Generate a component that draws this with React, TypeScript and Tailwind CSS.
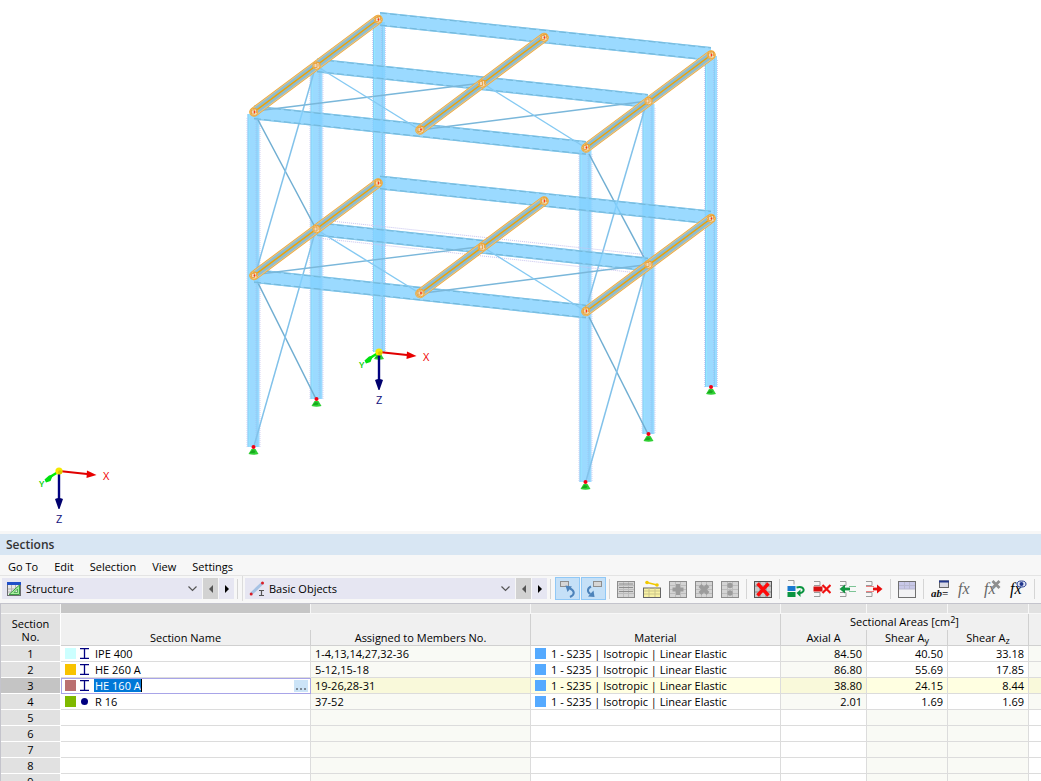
import { ReactNode } from "react";
import clsx from "clsx";

type Point = [number, number];

const FONT = "font-['Open_Sans','Noto_Sans',sans-serif]";

const MENU = ["Go To", "Edit", "Selection", "View", "Settings"];

type Section = {
  color: string;
  shape: "I" | "R";
  name: string;
  members: string;
  areas: [string, string, string];
};

const SECTIONS: Section[] = [
  { color: "bg-[#ccffff]", shape: "I", name: "IPE 400", members: "1-4,13,14,27,32-36", areas: ["84.50", "40.50", "33.18"] },
  { color: "bg-[#f8c300]", shape: "I", name: "HE 260 A", members: "5-12,15-18", areas: ["86.80", "55.69", "17.85"] },
  { color: "bg-[#ba7070]", shape: "I", name: "HE 160 A", members: "19-26,28-31", areas: ["38.80", "24.15", "8.44"] },
  { color: "bg-[#7fb900]", shape: "R", name: "R 16", members: "37-52", areas: ["2.01", "1.69", "1.69"] },
];

const MATERIAL = "1 - S235 | Isotropic | Linear Elastic";
const ACTIVE = 3;

/* ---------- structure model ---------- */

// columns: x, top, bottom
const COLUMNS: [number, number, number][] = [
  [379, 22, 352],
  [711, 56, 387],
  [316.5, 68, 399],
  [648.5, 104, 434],
  [253.5, 114, 447],
  [585.5, 150, 482],
];

// one storey, the lower one is the same shape 164px further down
const BEAMS: [Point, Point][] = [
  [[380, 19], [711, 54]],
  [[317, 65.5], [648, 101]],
  [[254, 112.5], [586, 148]],
];

const PURLINS: [Point, Point][] = [
  [[378, 19.5], [254, 112]],
  [[544, 37.5], [420, 130]],
  [[711, 55], [586, 148]],
];

const NODES: Point[] = [
  [378, 19.5], [316.5, 65.5], [254, 112],
  [544, 37.5], [482, 83.5], [420.5, 129.5],
  [711, 55], [648.5, 101], [586, 147.5],
];

const FLOOR_BRACES: [Point, Point, string][] = [
  [[256, 111], [482, 83], "#7ab7da"],
  [[318, 67], [420, 130], "#84c9f2"],
  [[420, 130], [648, 101], "#7ab7da"],
  [[482, 83], [586, 148], "#84c9f2"],
];

const WALL_BRACES: [Point, Point, string][] = [
  [[257, 118], [316, 229], "#70aed2"],
  [[314, 72], [256, 272], "#82c2ea"],
  [[589, 154], [648, 265], "#70aed2"],
  [[645, 108], [588, 302], "#82c2ea"],
  [[257, 281], [316, 399], "#70aed2"],
  [[314, 236], [254, 446], "#82c2ea"],
  [[589, 317], [648, 434], "#70aed2"],
  [[645, 272], [586, 481], "#82c2ea"],
];

function Column({ x, top, bottom }: { x: number; top: number; bottom: number }) {
  return (
    <g>
      <rect x={x - 6} y={top} width={12} height={bottom - top} fill="#82d1ff" opacity={0.8} />
      <path d={`M${x - 4.5} ${top}V${bottom}`} stroke="#96e8ff" />
      <path d={`M${x - 5.5} ${top}V${bottom}M${x + 3.5} ${top}V${bottom}`} stroke="#83ccf5" strokeWidth={0.8} />
      <path
        d={`M${x - 6.5} ${top + 4}V${bottom}M${x + 6.5} ${top + 4}V${bottom}`}
        stroke="#c8c4f0"
        strokeWidth={0.8}
        strokeDasharray="1 1"
      />
      <path d={`M${x + 2.5} ${top}V${bottom}`} stroke="#a5b8ec" strokeWidth={0.6} strokeDasharray="1 1" />
    </g>
  );
}

function Beam({ from: [x1, y1], to: [x2, y2], dotted }: { from: Point; to: Point; dotted?: boolean }) {
  return (
    <g>
      <path d={`M${x1} ${y1 - 7}L${x2} ${y2 - 7}V${y2 + 7}L${x1} ${y1 + 7}Z`} fill="#82d1ff" opacity={0.8} />
      <path d={`M${x1} ${y1 - 6.5}L${x2} ${y2 - 6.5}M${x1} ${y1 + 6.5}L${x2} ${y2 + 6.5}`} stroke="#86c6e8" />
      <path
        d={`M${x1} ${y1 - 6}L${x2} ${y2 - 6}M${x1} ${y1 + 6}L${x2} ${y2 + 6}`}
        stroke="#6fb6d8"
        strokeWidth={0.9}
        strokeDasharray="7 3"
      />
      {dotted && (
        <path
          d={`M${x1 + 14} ${y1 - 8}L${x2 - 4} ${y2 - 10}M${x1} ${y1 + 9}L${x2 - 14} ${y2 + 8}`}
          stroke="#c8c4f0"
          strokeDasharray="1 1"
        />
      )}
    </g>
  );
}

function Purlin({ from: [x1, y1], to: [x2, y2] }: { from: Point; to: Point }) {
  const d = `M${x1} ${y1}L${x2} ${y2}`;
  return (
    <g fill="none" strokeLinecap="round">
      <path d={d} stroke="#f2a93a" strokeWidth={9.6} />
      <path d={d} stroke="#d9c796" strokeWidth={8} />
      <path d={d} stroke="#8cbcd2" strokeWidth={6.4} />
      <path d={d} stroke="#f2a200" strokeWidth={1.5} />
    </g>
  );
}

function Node({ at: [x, y], inner }: { at: Point; inner: boolean }) {
  return (
    <g fill="none">
      <circle cx={x} cy={y} r={3.8} fill="#f0d9bb" stroke="#f2a62c" strokeWidth={0.9} />
      <path d={`M${x - 2.5} ${y - 2}h3v4h-3ZM${x - 1} ${y - 3}h3.500v4`} stroke="#e59a30" strokeWidth={0.8} />
      {!inner && <circle cx={x + 0.5} cy={y} r={0.9} fill="#ff2a1a" />}
    </g>
  );
}

function Storey({ dy, dotted }: { dy: number; dotted?: boolean }) {
  return (
    <g transform={`translate(0 ${dy})`}>
      {BEAMS.map(([a, b], i) => (
        <Beam key={i} from={a} to={b} dotted={dotted && i === 1} />
      ))}
      {FLOOR_BRACES.map(([a, b, stroke], i) => (
        <path key={i} d={`M${a}L${b}`} stroke={stroke} strokeWidth={1.4} />
      ))}
      {PURLINS.map(([a, b], i) => (
        <Purlin key={i} from={a} to={b} />
      ))}
      {NODES.map((p, i) => (
        <Node key={i} at={p} inner={i % 3 === 1} />
      ))}
    </g>
  );
}

function Axes({ x, y }: { x: number; y: number }) {
  return (
    <g transform={`translate(${x} ${y})`}>
      <path d="M0 0L28 3" stroke="#e00000" strokeWidth={2.2} />
      <path d="M28 -0.5L37.500 4L27.500 7Z" fill="#e80000" />
      <path d="M0 2V29" stroke="#000080" strokeWidth={2.4} />
      <path d="M-4 28Q0 26 4 28L0.500 38H-0.500Z" fill="#00006e" />
      <path d="M-1 1L-9 6" stroke="#00f000" strokeWidth={2.6} />
      <path d="M-6 4L-10 4.500L-14.500 8.500L-13 11.500L-8.500 10Z" fill="#00e010" />
      <circle r={3.6} fill="#f4e800" />
      <circle cx={1} cy={1.2} r={2} fill="#d8c800" />
      <text x={44} y={9} fontSize={11} fill="#f00000">X</text>
      <text x={-20} y={16} fontSize={9} fontWeight={600} fill="#00d000">Y</text>
      <text x={-3} y={52} fontSize={11} fill="#10107c">Z</text>
    </g>
  );
}

function Model() {
  return (
    <svg viewBox="0 0 1041 531" className="block w-full shrink-0 bg-white" role="img" aria-label="Structure model">
      {COLUMNS.map(([x, top, bottom]) => (
        <Column key={x} x={x} top={top} bottom={bottom} />
      ))}
      {WALL_BRACES.map(([a, b, stroke], i) => (
        <path key={i} d={`M${a}L${b}`} stroke={stroke} strokeWidth={1.5} />
      ))}
      <Storey dy={0} />
      <Storey dy={163.5} dotted />
      {COLUMNS.map(([x, , y]) => (
        <g key={x}>
          <path d={`M${x - 2} ${y + 2}h4l3 5q-5 1.500 -10 0Z`} fill="#2fcf33" />
          <path d={`M${x - 4} ${y + 6}l3 -3l3 1l-1 2Z`} fill="#18a81e" />
          <circle cx={x} cy={y} r={2} fill="#f40012" />
        </g>
      ))}
      <Axes x={379} y={352} />
      <Axes x={59} y={471} />
    </svg>
  );
}

/* ---------- toolbar ---------- */

function Icon({ children }: { children: ReactNode }) {
  return (
    <svg width="18" height="18" viewBox="0 0 18 18" fill="none" aria-hidden="true">
      {children}
    </svg>
  );
}

function GreyGrid({ children }: { children?: ReactNode }) {
  return (
    <Icon>
      <rect x="0.500" y="1.500" width="17" height="16" fill="#d4d4d4" stroke="#8c8c8c" />
      <path d="M1 5.500h16M1 9.500h16M1 13.500h16M6.500 2v15M11.500 2v15" stroke="#bcbcbc" />
      {children}
    </Icon>
  );
}

function RowStubs() {
  return <path d="M1 1.500h6v4H1M1 12.500h6v4H1" stroke="#9b9b9b" />;
}

function Fx({ className }: { className: string }) {
  return (
    <text x="1" y="14" fontSize="16" fontStyle="italic" className={clsx("font-['Liberation_Serif',serif]", className)}>
      fx
    </text>
  );
}

function Separator() {
  return <span className="mx-[3px] h-5 w-px shrink-0 bg-[#d5d5d5]" />;
}

function Tool({ label, active, children }: { label: string; active?: boolean; children: ReactNode }) {
  return (
    <button
      type="button"
      aria-label={label}
      aria-pressed={active}
      className={clsx(
        "flex h-[23px] shrink-0 items-center justify-center",
        active ? "ml-px w-[25px] border border-[#90c8f6] bg-[#c5e0f7]" : "w-[26px]"
      )}
    >
      {children}
    </button>
  );
}

function Stepper() {
  return (
    <>
      <button type="button" aria-label="Previous" className="ml-px flex h-[21px] w-[15px] shrink-0 items-center justify-center bg-[#d2d2d2]">
        <svg width="4" height="8" viewBox="0 0 4 8"><path d="M4 0v8L0 4Z" fill="#555" /></svg>
      </button>
      <button type="button" aria-label="Next" className="ml-px flex h-[21px] w-[15px] shrink-0 items-center justify-center bg-[#e6e6f2]">
        <svg width="4" height="8" viewBox="0 0 4 8"><path d="M0 0v8L4 4Z" fill="#000" /></svg>
      </button>
    </>
  );
}

function Picker({ label, value, width, icon }: { label: string; value: string; width: string; icon: ReactNode }) {
  return (
    <div className={clsx("relative h-[21px] shrink-0 bg-[#e6e6f2]", width)}>
      <span className="pointer-events-none absolute inset-y-0 left-1 flex items-center">{icon}</span>
      <select aria-label={label} className="block h-full w-full appearance-none bg-transparent pl-6 leading-5 outline-none">
        <option>{value}</option>
      </select>
      <span className="pointer-events-none absolute inset-y-0 right-[5px] flex items-center">
        <svg width="9" height="6" viewBox="0 0 9 6" fill="none"><path d="M0.500 0.500l4 4l4 -4" stroke="#555" strokeWidth="1.200" /></svg>
      </span>
    </div>
  );
}

function Toolbar() {
  return (
    <div className="flex h-[28px] items-center border-t border-[#e4e4e4] bg-[#f7f7f7] pb-0.5 pl-0.5">
      <Picker
        label="Category"
        value="Structure"
        width="w-[200px]"
        icon={
          <svg width="16" height="16" viewBox="0 0 16 16" fill="none">
            <rect x="1.500" y="1.500" width="13" height="13" fill="#e8e8e8" stroke="#6c6c70" />
            <path d="M1 2.500h14" stroke="#1f4fc8" strokeWidth="3" />
            <path d="M2 8h12M2 11h12M5.500 4v10M9.500 4v10" stroke="#b2b2b2" />
            <path d="M3 13.500L13.500 4v9.500Z" fill="#a6f09c" stroke="#3d9a48" />
            <path d="M8 11.500L11.500 8v3.500Z" fill="#e8e8e8" stroke="#3d9a48" strokeWidth="0.800" />
          </svg>
        }
      />
      <Stepper />
      <span className="ml-[3px] h-5 w-px shrink-0 bg-[#d5d5d5]" />
      <span className="mr-0.5 ml-1 h-full w-px shrink-0 bg-[#dcdcdc]" />
      <Picker
        label="Object group"
        value="Basic Objects"
        width="w-[270px]"
        icon={
          <svg width="16" height="16" viewBox="0 0 16 16" fill="none">
            <path d="M2.500 12.500L13 2.500" stroke="#a6c2e4" strokeWidth="3" />
            <circle cx="2.200" cy="13" r="1.500" fill="#d81e28" />
            <circle cx="13.500" cy="2" r="1.500" fill="#d81e28" />
            <path d="M10 9.500h5M12.500 9.500v5M10 14.500h5" stroke="#555" strokeWidth="1.200" />
          </svg>
        }
      />
      <Stepper />
      <Separator />
      <Tool label="Select in model" active>
        <Icon>
          <rect x="1.500" y="1.500" width="8" height="5" fill="#d6d6d6" stroke="#8e8e8e" />
          <path d="M11 17C16.500 14.500 15.500 10.500 11 8.500" stroke="#4c82ba" strokeWidth="2" />
          <path d="M6.500 5.500L13 6.500L8.500 12Z" fill="#4c82ba" />
        </Icon>
      </Tool>
      <Tool label="Select in table" active>
        <Icon>
          <rect x="8.500" y="1.500" width="8" height="5" fill="#d6d6d6" stroke="#8e8e8e" />
          <path d="M6 6.500C2 8.500 2 12 5.500 14" stroke="#4c82ba" strokeWidth="2" />
          <path d="M8.500 10.500L9.500 17L3 16.500Z" fill="#4c82ba" />
        </Icon>
      </Tool>
      <Separator />
      <Tool label="Edit table">
        <GreyGrid><path d="M2 4h14M2 7.500h14M2 11.500h14" stroke="#8c8c8c" /></GreyGrid>
      </Tool>
      <Tool label="New member">
        <Icon>
          <rect x="0.500" y="8" width="17" height="9.500" fill="#f8f2a4" stroke="#666" />
          <path d="M1 11h16M1 14h16M6 8v9M12 8v9" stroke="#cbc48a" />
          <path d="M4 2.500L14 5" stroke="#f0c800" strokeWidth="1.600" />
          <circle cx="4" cy="2.500" r="1.800" fill="#f0c800" />
          <circle cx="14" cy="5" r="1.800" fill="#f0c800" />
        </Icon>
      </Tool>
      <Tool label="Add">
        <GreyGrid><path d="M9 4v11M3.500 9.500h11" stroke="#9c9c9c" strokeWidth="4" /></GreyGrid>
      </Tool>
      <Tool label="Remove">
        <GreyGrid><path d="M5 5.500l8 8M13 5.500l-8 8" stroke="#9c9c9c" strokeWidth="4" /></GreyGrid>
      </Tool>
      <Tool label="Details">
        <GreyGrid>
          <circle cx="9" cy="5.500" r="2.700" fill="#9c9c9c" />
          <circle cx="9" cy="13" r="2.700" fill="#9c9c9c" />
        </GreyGrid>
      </Tool>
      <Separator />
      <Tool label="Delete all">
        <Icon>
          <rect x="0.500" y="1.500" width="17" height="16" fill="#c9c9c9" stroke="#555" />
          <path d="M1 6h16M1 12h16M6 2v15M12 2v15" stroke="#888" />
          <path d="M3.500 3.500l11 12M14.500 3.500l-11 12" stroke="#ff0a0a" strokeWidth="3.400" />
        </Icon>
      </Tool>
      <Separator />
      <Tool label="Copy row">
        <Icon>
          <path d="M1 0.500h6v4" stroke="#9b9b9b" />
          <rect x="0.500" y="6" width="8" height="5" fill="#1878d0" />
          <rect x="0.500" y="12" width="8" height="5" fill="#0a9440" />
          <path d="M9.500 7.500C18 5.500 18.500 12.500 13 13" stroke="#0a9440" strokeWidth="2" />
          <path d="M13.500 9.500v7.500L9.500 13Z" fill="#0a9440" />
        </Icon>
      </Tool>
      <Tool label="Delete row">
        <Icon>
          <RowStubs />
          <rect x="0.500" y="6.500" width="9" height="5" fill="#d81010" />
          <path d="M9.500 5l8 8M17.500 5l-8 8" stroke="#f01010" strokeWidth="2.200" />
        </Icon>
      </Tool>
      <Tool label="Insert row">
        <Icon>
          <RowStubs />
          <path d="M17 6.500h-7M17 11.500h-7" stroke="#7dc496" />
          <path d="M3 9h8" stroke="#109440" strokeWidth="2.800" />
          <path d="M6 4.500v9L0.500 9Z" fill="#109440" />
        </Icon>
      </Tool>
      <Tool label="Cut row">
        <Icon>
          <RowStubs />
          <path d="M1 6.500h8M1 11.500h8" stroke="#f08080" />
          <path d="M8 9h6" stroke="#e80c0c" strokeWidth="2.800" />
          <path d="M12 4.500v9L17.500 9Z" fill="#e80c0c" />
        </Icon>
      </Tool>
      <Separator />
      <Tool label="Table view">
        <Icon>
          <rect x="0.500" y="1.500" width="17" height="16" fill="#f2f2f4" stroke="#707070" />
          <path d="M1 2h16v7H1Z" fill="#c8c8e8" />
          <path d="M1 9h16M6.500 2v7M11.500 2v7M1 5.500h16" stroke="#b8b8d0" />
        </Icon>
      </Tool>
      <Separator />
      <Tool label="Rename">
        <Icon>
          <rect x="8.500" y="1" width="9" height="6.500" fill="#d8d8e4" stroke="#666" />
          <path d="M8 1.500h10" stroke="#20368c" strokeWidth="2" />
          <text x="0" y="17" fontSize="11" fontWeight="700" fontStyle="italic" fill="#111" className="font-['Liberation_Serif',serif]">ab=</text>
        </Icon>
      </Tool>
      <Tool label="Formula">
        <Icon><Fx className="fill-[#666]" /></Icon>
      </Tool>
      <Tool label="Delete formula">
        <Icon>
          <Fx className="fill-[#666]" />
          <path d="M9.500 1l7 7M16.500 1l-7 7" stroke="#8f8f8f" strokeWidth="2.800" />
        </Icon>
      </Tool>
      <Tool label="Show formula">
        <Icon>
          <Fx className="fill-black" />
          <ellipse cx="12.500" cy="4" rx="4.500" ry="3" fill="#dfe5f5" stroke="#20368c" />
          <circle cx="12.500" cy="4" r="2" fill="#20368c" />
        </Icon>
      </Tool>
      <Separator />
    </div>
  );
}

/* ---------- table ---------- */

const CELL = "h-4 overflow-hidden border-b border-[#dcdcdc] p-0 whitespace-nowrap";
const HEAD = "h-4 border-[#d0d0d0] bg-[#f0f0f0] p-0 font-normal";
const READ_ONLY = "bg-[#f9faf5]";

function ShapeIcon({ shape }: { shape: "I" | "R" }) {
  return (
    <svg width="9" height="11" viewBox="0 0 9 11" className="ml-1 shrink-0" fill="none" aria-hidden="true">
      {shape === "I" ? (
        <path d="M0 0.500h9M4.500 0.500v10M0 10.500h9" stroke="#000080" strokeWidth="1.300" />
      ) : (
        <circle cx="4.500" cy="5.500" r="3.500" fill="#000080" />
      )}
    </svg>
  );
}

function SectionRow({ no }: { no: number }) {
  const section = SECTIONS[no - 1];
  const active = no === ACTIVE;
  const plain = active ? "bg-[#ffffe1]" : "bg-white";
  const shaded = active ? "bg-[#f9f9da]" : READ_ONLY;
  return (
    <tr>
      <th scope="row" className={clsx("h-4 border-r border-b border-white p-0 text-center font-normal", active ? "bg-[#c4c4c4]" : "bg-[#e1e1e1]")}>
        {no}
      </th>
      <td className={clsx(CELL, "border-r bg-white", active && "outline -outline-offset-1 outline-[#a8a4e8]")}>
        {section && (
          <div className="flex h-[15px] items-center pl-1">
            <span className={clsx("size-[11px] shrink-0", section.color)} />
            <ShapeIcon shape={section.shape} />
            {active ? (
              <>
                <input
                  aria-label="Section name"
                  defaultValue={section.name}
                  className="ml-[5px] h-[13px] w-12 border-r border-black bg-[#0078d7] pl-px text-white outline-none"
                />
                <button type="button" aria-label="Choose section" className="mr-0.5 ml-auto flex h-3 w-3.5 items-end justify-center gap-0.5 bg-[#cce4f7] pb-0.5">
                  <span className="size-0.5 bg-[#7d8a96]" />
                  <span className="size-0.5 bg-[#7d8a96]" />
                  <span className="size-0.5 bg-[#7d8a96]" />
                </button>
              </>
            ) : (
              <span className="ml-1.5">{section.name}</span>
            )}
          </div>
        )}
      </td>
      <td className={clsx(CELL, "border-r pl-1", shaded)}>{section?.members}</td>
      <td className={clsx(CELL, "border-r", plain)}>
        {section && (
          <div className="flex h-[15px] items-center pl-1">
            <span className="size-[11px] shrink-0 bg-[#55aaff]" />
            <span className="ml-[5px]">{MATERIAL}</span>
          </div>
        )}
      </td>
      <td className={clsx(CELL, "border-r pr-1 text-right", section ? shaded : "bg-white")}>{section?.areas[0]}</td>
      <td className={clsx(CELL, "border-r pr-1 text-right", section ? plain : READ_ONLY)}>{section?.areas[1]}</td>
      <td className={clsx(CELL, "border-r pr-1 text-right", section ? plain : READ_ONLY)}>{section?.areas[2]}</td>
      <td className={clsx(CELL, section ? shaded : "bg-white")} />
    </tr>
  );
}

function SectionsTable() {
  return (
    <table className="w-full table-fixed border-separate border-spacing-0 border-t border-l border-[#c4c4cc] leading-[15px]">
      <colgroup>
        <col className="w-[60px]" />
        <col className="w-[250px]" />
        <col className="w-[220px]" />
        <col className="w-[250px]" />
        <col className="w-[86px]" />
        <col className="w-[81px]" />
        <col className="w-[81px]" />
        <col />
      </colgroup>
      <thead>
        <tr>
          {[0, 1, 2, 3, 4, 5, 6, 7].map((i) => (
            <td
              key={i}
              className={clsx("h-2.5 border-b border-[#f7f7f7] p-0", i < 7 && "border-r", i === 1 ? "bg-[#c6c6c6]" : "bg-[#e1e1e1]")}
            />
          ))}
        </tr>
        <tr>
          <th rowSpan={2} scope="col" className="border-r border-b border-white bg-[#e1e1e1] p-0 leading-[13px] font-normal">
            Section
            <br />
            No.
          </th>
          <td colSpan={2} className={clsx(HEAD, "border-r")} />
          <td className={clsx(HEAD, "border-r")} />
          <th colSpan={3} scope="colgroup" className={clsx(HEAD, "border-r leading-[14px]")}>
            Sectional Areas [cm<sup className="top-[-3px] text-[9px] leading-none">2</sup>]
          </th>
          <td className={HEAD} />
        </tr>
        <tr>
          <th scope="col" className={clsx(HEAD, "border-r border-b leading-[14px]")}>Section Name</th>
          <th scope="col" className={clsx(HEAD, "border-r border-b leading-[14px]")}>Assigned to Members No.</th>
          <th scope="col" className={clsx(HEAD, "border-r border-b leading-[14px]")}>Material</th>
          <th scope="col" className={clsx(HEAD, "border-r border-b leading-[14px]")}>Axial A</th>
          <th scope="col" className={clsx(HEAD, "border-r border-b leading-[14px]")}>
            Shear A<sub className="text-[9px] leading-none">y</sub>
          </th>
          <th scope="col" className={clsx(HEAD, "border-r border-b leading-[14px]")}>
            Shear A<sub className="text-[9px] leading-none">z</sub>
          </th>
          <td className={clsx(HEAD, "border-b")} />
        </tr>
      </thead>
      <tbody>
        {[1, 2, 3, 4, 5, 6, 7, 8, 9].map((no) => (
          <SectionRow key={no} no={no} />
        ))}
      </tbody>
    </table>
  );
}

export default function App() {
  return (
    <div className={clsx("flex h-screen flex-col overflow-hidden bg-white text-[11px] text-black", FONT)}>
      <Model />
      <section className="min-h-0 flex-1 overflow-hidden bg-[#f7f7f7] pt-[3px]">
        <h2 className="h-[21px] bg-[#d8e6f3] pl-1.5 text-[12px] leading-[22px] font-semibold text-[#333]">Sections</h2>
        <nav className="flex h-5 items-center gap-4 pt-1 pl-2">
          {MENU.map((item) => (
            <button key={item} type="button">
              {item}
            </button>
          ))}
        </nav>
        <Toolbar />
        <SectionsTable />
      </section>
    </div>
  );
}
